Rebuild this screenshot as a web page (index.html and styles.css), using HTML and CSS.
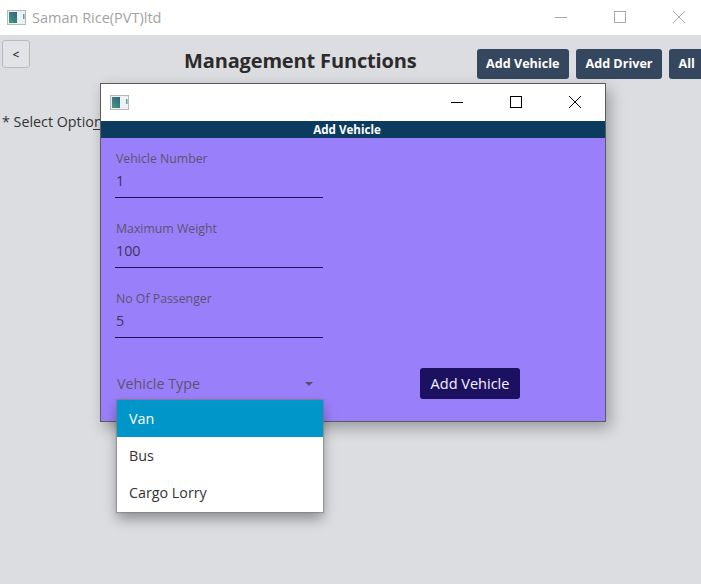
FILE: index.html
```html
<!DOCTYPE html>
<html>
<head>
<meta charset="utf-8">
<title>Saman Rice(PVT)ltd</title>
<link rel="stylesheet" href="styles.css">
</head>
<body>

<svg class="defs" width="0" height="0">
  <linearGradient id="icon-fill" x1="1" y1="0" x2="0" y2="1">
    <stop offset="0" stop-color="#2f6089"/>
    <stop offset="1" stop-color="#489a74"/>
  </linearGradient>
</svg>

<div class="titlebar">
  <svg class="app-icon" width="19" height="15" viewBox="0 0 19 15">
    <rect x="0.5" y="0.5" width="18" height="14" fill="#eef1f1" stroke="#b4babc"/>
    <rect x="2" y="2" width="8" height="11" fill="url(#icon-fill)"/>
    <rect x="16" y="4" width="1.5" height="5" fill="#5aa392"/>
  </svg>
  <span class="app-name">Saman Rice(PVT)ltd</span>
  <div class="win-btns muted">
    <svg width="14" height="14" viewBox="0 0 14 14"><path d="M1 7.5H13" stroke="#a8a8a8"/></svg>
    <svg width="14" height="14" viewBox="0 0 14 14"><rect x="1.5" y="1.5" width="11" height="11" fill="none" stroke="#a8a8a8"/></svg>
    <svg width="14" height="14" viewBox="0 0 14 14"><path d="M1 1L13 13M13 1L1 13" stroke="#a8a8a8"/></svg>
  </div>
</div>

<div class="main">
  <div class="toolbar">
    <button class="back">&lt;</button>
    <h1 class="heading">Management Functions</h1>
    <div class="actions">
      <button class="dark-btn">Add Vehicle</button>
      <button class="dark-btn">Add Driver</button>
      <button class="dark-btn last">All</button>
    </div>
  </div>
  <div class="select-option">* Select Option</div>
  <div class="select-line"></div>
</div>

<div class="modal">
  <div class="modal-title">
    <svg class="app-icon" width="19" height="15" viewBox="0 0 19 15">
      <rect x="0.5" y="0.5" width="18" height="14" fill="#eef1f1" stroke="#b4babc"/>
      <rect x="2" y="2" width="8" height="11" fill="url(#icon-fill)"/>
      <rect x="16" y="4" width="1.5" height="5" fill="#5aa392"/>
    </svg>
    <div class="win-btns">
      <svg width="14" height="14" viewBox="0 0 14 14"><path d="M1 7.5H13" stroke="#000"/></svg>
      <svg width="14" height="14" viewBox="0 0 14 14"><rect x="1.5" y="1.5" width="11" height="11" fill="none" stroke="#000"/></svg>
      <svg width="14" height="14" viewBox="0 0 14 14"><path d="M1 1L13 13M13 1L1 13" stroke="#000"/></svg>
    </div>
  </div>
  <div class="modal-band">Add Vehicle</div>
  <div class="modal-body">
    <div class="field">
      <div class="field-label">Vehicle Number</div>
      <div class="field-value">1</div>
    </div>
    <div class="field">
      <div class="field-label">Maximum Weight</div>
      <div class="field-value">100</div>
    </div>
    <div class="field">
      <div class="field-label">No Of Passenger</div>
      <div class="field-value">5</div>
    </div>
    <div class="bottom-row">
      <div class="combo">
        <span>Vehicle Type</span>
        <span class="arrow"></span>
      </div>
      <button class="submit">Add Vehicle</button>
    </div>
  </div>
</div>

<ul class="dropdown">
  <li class="selected">Van</li>
  <li>Bus</li>
  <li>Cargo Lorry</li>
</ul>

</body>
</html>
```

FILE: styles.css
```css
html, body {
  height: 100%;
}

body {
  margin: 0;
  overflow: hidden;
  font-family: "Open Sans", "Noto Sans", sans-serif;
  font-size: 14px;
  color: #333;
  background-color: #dcdde1;
  display: flex;
  flex-direction: column;
}

button {
  font-family: inherit;
}

.defs {
  position: absolute;
}

.titlebar {
  height: 35px;
  flex: none;
  background-color: #fff;
  display: flex;
  align-items: center;
  padding-left: 7px;
}

.app-name {
  margin-left: 6px;
  font-size: 14.5px;
  color: #a3a3a3;
}

.win-btns {
  margin-left: auto;
  margin-bottom: 2px;
  display: flex;
  gap: 45px;
  padding-right: 15px;
}

.main {
  flex: 1;
}

.toolbar {
  display: flex;
  align-items: flex-start;
  padding: 5px 0 0 2px;
  white-space: nowrap;
}

.back {
  flex: none;
  width: 28px;
  height: 28px;
  padding: 0;
  font-size: 12px;
  font-weight: 600;
  color: #333;
  background-color: #e2e3e6;
  border: 1px solid #b9b9bc;
  border-radius: 3px;
}

.heading {
  margin: 8px 0 0 154px;
  font-size: 20px;
  font-weight: 700;
  line-height: 26px;
  letter-spacing: -0.15px;
  color: #2b2b2b;
}

.actions {
  display: flex;
  gap: 7px;
  margin: 9px 0 0 60px;
}

.dark-btn {
  flex: none;
  height: 30px;
  padding: 0 9.5px 2px;
  font-size: 12.6px;
  font-weight: 700;
  color: #fff;
  background-color: #35475e;
  border: none;
  border-radius: 3px;
}

.dark-btn.last {
  width: 50px;
  text-align: left;
}

.select-option {
  margin: 33px 0 0 2px;
  font-size: 14.3px;
  line-height: 20px;
}

.select-line {
  position: absolute;
  left: 93px;
  top: 129px;
  width: 30px;
  height: 1px;
  background-color: #333;
}

.modal {
  position: absolute;
  left: 100px;
  top: 83px;
  width: 504px;
  height: 337px;
  border: 1px solid #5c5c5c;
  box-shadow: 4px 6px 14px rgba(0, 0, 0, 0.3);
  display: flex;
  flex-direction: column;
}

.modal-title {
  height: 37px;
  flex: none;
  background-color: #fff;
  display: flex;
  align-items: center;
  padding-left: 9px;
}

.modal-title .win-btns {
  padding-right: 23px;
}

.modal-band {
  height: 17px;
  flex: none;
  padding-right: 12px;
  background-color: #0b3c60;
  color: #fff;
  font-size: 11.6px;
  font-weight: 700;
  line-height: 17px;
  text-align: center;
}

.modal-body {
  flex: 1;
  background-color: #9a7ffa;
  padding: 12px 0 0 14px;
}

.field {
  width: 208px;
  height: 47px;
  margin-bottom: 22px;
  border-bottom: 1px solid #1f1060;
}

.field-label {
  padding-left: 1px;
  font-size: 12.3px;
  line-height: 17px;
  color: #5b5470;
}

.field-value {
  padding-left: 1px;
  margin-top: 4px;
  font-size: 14.3px;
  line-height: 20px;
  color: #3c3560;
}

.bottom-row {
  display: flex;
  align-items: center;
  margin-top: 30px;
}

.combo {
  width: 198px;
  padding-left: 2px;
  display: flex;
  justify-content: space-between;
  align-items: center;
  font-size: 14.3px;
  color: #5b5470;
}

.arrow {
  width: 0;
  height: 0;
  margin-right: 2px;
  border-left: 4px solid transparent;
  border-right: 4px solid transparent;
  border-top: 4px solid #55506a;
}

.submit {
  width: 100px;
  height: 31px;
  margin-left: 105px;
  padding: 0;
  font-size: 14.5px;
  color: #f4f2ff;
  background-color: #1c1161;
  border: none;
  border-radius: 3px;
}

.dropdown {
  position: absolute;
  left: 117px;
  top: 400px;
  width: 206px;
  margin: 0;
  padding: 0 0 1px;
  list-style: none;
  background-color: #fff;
  box-shadow: 0 0 1px 1px rgba(120, 120, 120, 0.55), 0 7px 12px rgba(0, 0, 0, 0.35);
}

.dropdown li {
  height: 37px;
  line-height: 37px;
  padding-left: 12px;
  font-size: 14.3px;
  color: #333;
}

.dropdown li.selected {
  background-color: #0096c9;
  color: #fff;
}
```
